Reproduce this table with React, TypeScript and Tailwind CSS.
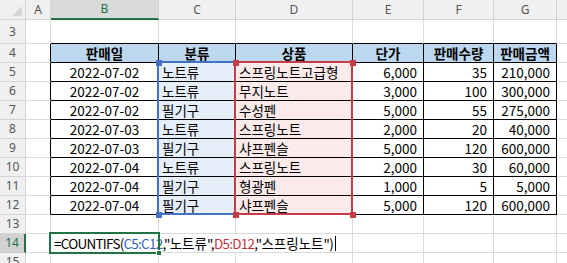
import type { ReactNode } from "react";

const grid = "border-[#dadada]";

const data = [
  ["2022-07-02", "노트류", "스프링노트고급형", "6,000", "35", "210,000"],
  ["2022-07-02", "노트류", "무지노트", "3,000", "100", "300,000"],
  ["2022-07-02", "필기구", "수성펜", "5,000", "55", "275,000"],
  ["2022-07-03", "노트류", "스프링노트", "2,000", "20", "40,000"],
  ["2022-07-03", "필기구", "샤프펜슬", "5,000", "120", "600,000"],
  ["2022-07-04", "노트류", "스프링노트", "2,000", "30", "60,000"],
  ["2022-07-04", "필기구", "형광펜", "1,000", "5", "5,000"],
  ["2022-07-04", "필기구", "샤프펜슬", "5,000", "120", "600,000"],
];

const colW = ["w-[108px]", "w-[77px]", "w-[117px]", "w-[71px]", "w-[70px]", "w-[63px]"];

function RowHead({ n, active }: { n: number; active?: boolean }) {
  return (
    <div
      className={
        active
          ? "flex w-[26px] shrink-0 items-center justify-center border-b border-r-2 border-b-[#c8c8c8] border-r-[#217346] bg-[#d2d2d2] font-['Noto_Sans',sans-serif] text-[12px] text-[#217346]"
          : "flex w-[26px] shrink-0 items-center justify-center border-b border-r border-[#d4d4d4] bg-[#f0f0f0] font-['Noto_Sans',sans-serif] text-[12px] text-[#555]"
      }
    >
      {n}
    </div>
  );
}

function Cell({ w, cls, children }: { w: string; cls: string; children?: ReactNode }) {
  return <div className={`${w} flex shrink-0 items-center overflow-visible whitespace-nowrap ${cls}`}>{children}</div>;
}

export default function App() {
  return (
    <div className="relative h-[263px] w-[567px] overflow-hidden bg-white font-['Noto_Sans_CJK_KR',sans-serif] text-[13.5px] leading-[18px] text-black">
      {/* column headers */}
      <div className="flex h-[20px] font-['Noto_Sans',sans-serif] text-[12px] text-[#555]">
        <div className="relative w-[26px] shrink-0 border-b border-r border-[#d4d4d4] bg-[#f0f0f0]">
          <svg className="absolute bottom-[3px] right-[3px]" width="10" height="10" viewBox="0 0 10 10">
            <path d="M10 0 L10 10 L0 10 Z" fill="#d6d6d6" />
          </svg>
        </div>
        <div className="flex w-[25px] shrink-0 items-center justify-center border-b border-r border-[#d4d4d4] bg-[#f0f0f0]">A</div>
        <div className="flex w-[108px] shrink-0 items-center justify-center border-b-2 border-r border-b-[#217346] border-r-[#d4d4d4] bg-[#dadada] text-[#217346]">B</div>
        <div className="flex w-[77px] shrink-0 items-center justify-center border-b border-r border-[#d4d4d4] bg-[#f0f0f0]">C</div>
        <div className="flex w-[117px] shrink-0 items-center justify-center border-b border-r border-[#d4d4d4] bg-[#f0f0f0]">D</div>
        <div className="flex w-[71px] shrink-0 items-center justify-center border-b border-r border-[#d4d4d4] bg-[#f0f0f0]">E</div>
        <div className="flex w-[70px] shrink-0 items-center justify-center border-b border-r border-[#d4d4d4] bg-[#f0f0f0]">F</div>
        <div className="flex w-[63px] shrink-0 items-center justify-center border-b border-r border-[#d4d4d4] bg-[#f0f0f0]">G</div>
        <div className="flex-1 border-b border-[#d4d4d4] bg-[#f0f0f0]" />
      </div>

      {/* row 3 */}
      <div className="flex h-[24px]">
        <RowHead n={3} />
        <Cell w="w-[25px]" cls={`border-b border-r ${grid}`} />
        {colW.map((w) => (
          <Cell key={w} w={w} cls="border-b border-r border-b-black border-r-[#dadada]" />
        ))}
        <div className={`flex-1 border-b ${grid}`} />
      </div>

      {/* row 4 header */}
      <div className="flex h-[19px]">
        <RowHead n={4} />
        <Cell w="w-[25px]" cls="border-b border-r border-b-[#dadada] border-r-black" />
        {["판매일", "분류", "상품", "단가", "판매수량", "판매금액"].map((t, i) => (
          <Cell key={t} w={colW[i]} cls="justify-center border-b border-r border-black bg-[#bdd7ee] font-bold">
            {t}
          </Cell>
        ))}
        <div className={`flex-1 border-b ${grid}`} />
      </div>

      {data.map((r, i) => (
        <div key={i} className="flex h-[19px]">
          <RowHead n={i + 5} />
          <Cell w="w-[25px]" cls="border-b border-r border-b-[#dadada] border-r-black" />
          <Cell w={colW[0]} cls="justify-center border-b border-r border-black">{r[0]}</Cell>
          <Cell w={colW[1]} cls="border-b border-r border-black bg-[#e6eef9] pl-[3px]">{r[1]}</Cell>
          <Cell w={colW[2]} cls="border-b border-r border-black bg-[#fbeaea] pl-[3px]">{r[2]}</Cell>
          <Cell w={colW[3]} cls="justify-end border-b border-r border-black pr-[6px]">{r[3]}</Cell>
          <Cell w={colW[4]} cls="justify-end border-b border-r border-black pr-[6px]">{r[4]}</Cell>
          <Cell w={colW[5]} cls="justify-end border-b border-r border-black pr-[6px]">{r[5]}</Cell>
          <div className={`flex-1 border-b ${grid}`} />
        </div>
      ))}

      {/* row 13 */}
      <div className="flex h-[19px]">
        <RowHead n={13} />
        <Cell w="w-[25px]" cls={`border-b border-r ${grid}`} />
        {colW.map((w) => (
          <Cell key={w} w={w} cls={`border-b border-r ${grid}`} />
        ))}
        <div className={`flex-1 border-b ${grid}`} />
      </div>

      {/* row 14 - formula being edited */}
      <div className="flex h-[19px]">
        <RowHead n={14} active />
        <Cell w="w-[25px]" cls={`border-b border-r ${grid}`} />
        <Cell w="w-[302px]" cls={`border-b border-r ${grid} pl-[3px]`}>
          <span className="tracking-[-0.75px]">=COUNTIFS(</span>
          <span className="tracking-[-0.75px] text-[#3463c4]">C5:C12</span>
          <span className="tracking-[-0.75px]">,"</span>
          <span>노트류</span>
          <span className="tracking-[-0.75px]">",</span>
          <span className="tracking-[-0.75px] text-[#c8343e]">D5:D12</span>
          <span className="tracking-[-0.75px]">,"</span>
          <span>스프링노트</span>
          <span className="tracking-[-0.75px]">")</span>
          <span className="ml-[2px] inline-block h-[15px] w-px bg-black" />
        </Cell>
        {colW.slice(3).map((w) => (
          <Cell key={w} w={w} cls={`border-b border-r ${grid}`} />
        ))}
        <div className={`flex-1 border-b ${grid}`} />
      </div>

      {/* row 15 */}
      <div className="flex h-[19px]">
        <RowHead n={15} />
        <Cell w="w-[25px]" cls={`border-b border-r ${grid}`} />
        {colW.map((w) => (
          <Cell key={w} w={w} cls={`border-b border-r ${grid}`} />
        ))}
        <div className={`flex-1 border-b ${grid}`} />
      </div>

      {/* reference range highlights */}
      <div className="absolute left-[157px] top-[61px] h-[154px] w-[79px] border-2 border-[#4472c4]" />
      <div className="absolute left-[234px] top-[61px] h-[154px] w-[119px] border-2 border-[#c43c46]" />
      <div className="absolute left-[156px] top-[60px] h-[6px] w-[6px] bg-[#4472c4]" />
      <div className="absolute left-[156px] top-[212px] h-[6px] w-[6px] bg-[#4472c4]" />
      <div className="absolute left-[233px] top-[60px] h-[6px] w-[6px] bg-[#c43c46]" />
      <div className="absolute left-[350px] top-[60px] h-[6px] w-[6px] bg-[#c43c46]" />
      <div className="absolute left-[233px] top-[212px] h-[6px] w-[6px] bg-[#c43c46]" />
      <div className="absolute left-[350px] top-[212px] h-[6px] w-[6px] bg-[#c43c46]" />

      {/* active cell */}
      <div className="absolute left-[49px] top-[232px] h-[22px] w-[111px] border-2 border-[#217346]" />
      <div className="absolute left-[156px] top-[250px] h-[6px] w-[6px] border border-white bg-[#217346]" />
    </div>
  );
}
